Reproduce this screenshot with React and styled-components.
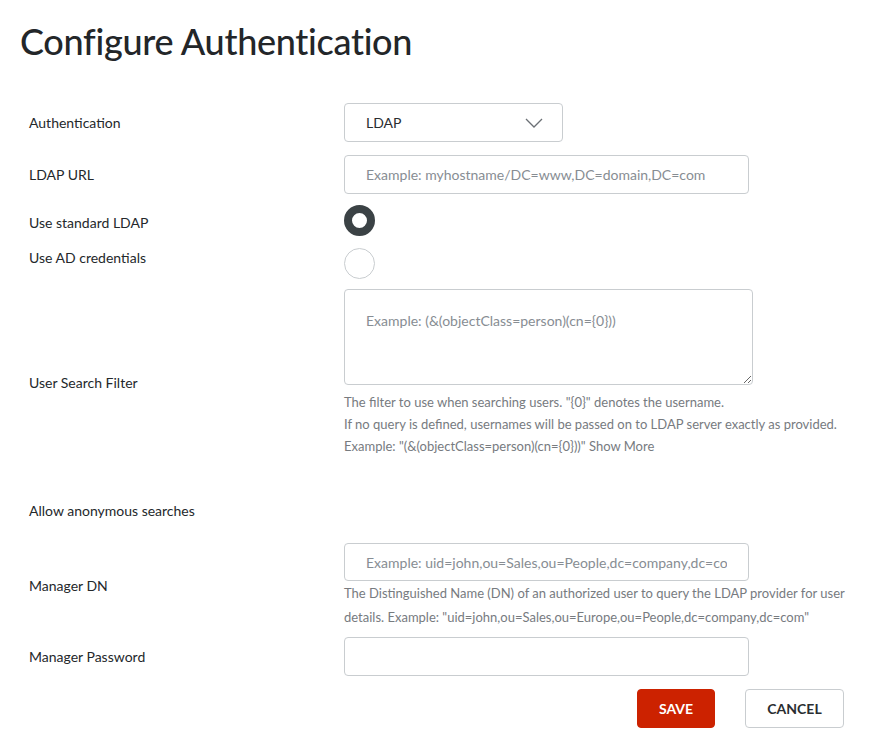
import React from 'react';
import styled, { createGlobalStyle } from 'styled-components';

const Global = createGlobalStyle`
  html, body { margin: 0; padding: 0; background: #fff; }
  body { font-family: 'Lato', 'Open Sans', sans-serif; color: #333; }
  * { box-sizing: border-box; }
`;

const Page = styled.div`
  padding: 16px 0 0 20px;
  width: 873px;
`;

const Title = styled.h1`
  margin: 0 0 37px;
  font-size: 36px;
  line-height: 50px;
  font-weight: 500;
  color: #232629;
  letter-spacing: -0.3px;
`;

const Form = styled.div`
  display: flex;
  flex-direction: column;
  padding-left: 9px;
`;

const Row = styled.div`
  display: flex;
  align-items: ${p => p.$top ? 'flex-start' : 'center'};
  margin-bottom: ${p => p.$gap ?? 13}px;
  min-height: ${p => p.$h ?? 0}px;
`;

const Label = styled.div`
  width: 315px;
  flex: none;
  font-size: 14px;
  line-height: ${p => p.$lh ?? 20}px;
  color: #24282b;
`;

const Control = styled.div`
  display: flex;
  flex-direction: column;
  margin-top: ${p => p.$mt ?? 0}px;
`;

const Select = styled.div`
  width: 219px;
  height: 39px;
  border: 1px solid #c9cdd0;
  border-radius: 4px;
  display: flex;
  align-items: center;
  justify-content: space-between;
  padding: 0 19px 0 21px;
  font-size: 14px;
  color: #2a2d30;
`;

const Input = styled.input`
  width: ${p => p.$w ?? 405}px;
  height: ${p => p.$h ?? 39}px;
  border: 1px solid #c9cdd0;
  border-radius: 4px;
  padding: 0 21px;
  font-family: inherit;
  font-size: 14px;
  color: #333;
  outline: none;
  &::placeholder { color: #878d93; }
`;

const TextArea = styled.textarea`
  width: 409px;
  height: 96px;
  border: 1px solid #c9cdd0;
  border-radius: 4px;
  padding: 21px 21px;
  font-family: inherit;
  font-size: 14px;
  line-height: 20px;
  outline: none;
  resize: vertical;
  &::placeholder { color: #878d93; }
`;

const Radio = styled.span`
  display: block;
  width: 31px;
  height: 31px;
  border-radius: 50%;
  border: ${p => p.$on ? '8px solid #3b4245' : '1px solid #c9cdd0'};
  background: #fff;
`;

const Help = styled.div`
  font-size: 13px;
  line-height: ${p => p.$lh ?? 22}px;
  color: #777b7f;
  margin-top: ${p => p.$mt ?? 6}px;
  max-width: ${p => p.$max ?? 510}px;
`;

const Actions = styled.div`
  display: flex;
  justify-content: flex-end;
  gap: 30px;
  padding-right: 29px;
  margin-top: 13px;
`;

const Button = styled.button`
  height: 39px;
  width: ${p => p.$w}px;
  border-radius: 4px;
  font-family: inherit;
  font-size: 14px;
  font-weight: 700;
  text-transform: uppercase;
  cursor: pointer;
  border: 1px solid ${p => p.$primary ? '#cc2200' : '#c9cdd0'};
  background: ${p => p.$primary ? '#cc2200' : '#fff'};
  color: ${p => p.$primary ? '#fff' : '#2a2d30'};
`;

const Chevron = () => (
  <svg width="18" height="10" viewBox="0 0 18 10" fill="none">
    <path d="M1 1l8 8 8-8" stroke="#6b7075" strokeWidth="1.3" />
  </svg>
);

export default function App() {
  return (
    <Page>
      <Global />
      <Title>Configure Authentication</Title>
      <Form>
        <Row>
          <Label>Authentication</Label>
          <Select>LDAP<Chevron /></Select>
        </Row>
        <Row $gap={11}>
          <Label>LDAP URL</Label>
          <Input placeholder="Example: myhostname/DC=www,DC=domain,DC=com" />
        </Row>
        <Row $top $gap={0}>
          <Label $lh={36}>Use standard LDAP</Label>
          <Radio $on />
        </Row>
        <Row $top $gap={10}>
          <Label $lh={34}>Use AD credentials</Label>
          <Control $mt={7}><Radio /></Control>
        </Row>
        <Row $gap={16}>
          <Label>User Search Filter</Label>
          <Control>
            <TextArea placeholder="Example: (&(objectClass=person)(cn={0}))" />
            <Help>
              The filter to use when searching users. "{'{0}'}" denotes the username.<br />
              If no query is defined, usernames will be passed on to LDAP server exactly as provided.<br />
              Example: "(&amp;(objectClass=person)(cn={'{0}'}))" Show More
            </Help>
            <div style={{ height: 20 }} />
          </Control>
        </Row>
        <Row $gap={14} $h={36}>
          <Label>Allow anonymous searches</Label>
        </Row>
        <Row $gap={8}>
          <Label>Manager DN</Label>
          <Control>
            <Input $h={38} placeholder="Example: uid=john,ou=Sales,ou=People,dc=company,dc=com" />
            <Help $lh={24} $mt={0} $max={502}>
              The Distinguished Name (DN) of an authorized user to query the LDAP provider for user details. Example: "uid=john,ou=Sales,ou=Europe,ou=People,dc=company,dc=com"
            </Help>
          </Control>
        </Row>
        <Row $gap={0}>
          <Label>Manager Password</Label>
          <Input type="password" />
        </Row>
        <Actions>
          <Button $primary $w={78}>Save</Button>
          <Button $w={99}>Cancel</Button>
        </Actions>
      </Form>
    </Page>
  );
}
